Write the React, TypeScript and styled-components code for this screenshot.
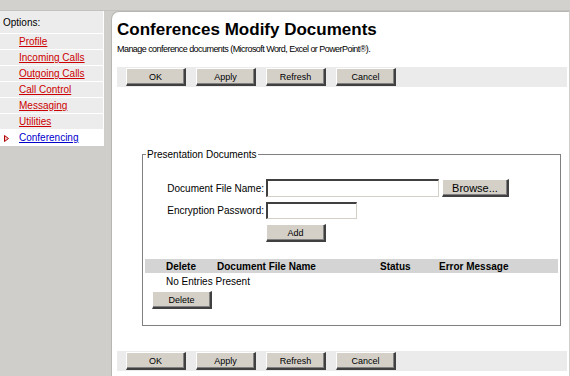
import React from 'react';
import styled, { createGlobalStyle } from 'styled-components';

const GlobalStyle = createGlobalStyle`
  html, body {
    margin: 0;
    padding: 0;
    background: #ffffff;
  }
  body {
    font-family: "Liberation Sans", Arial, sans-serif;
    font-size: 10px;
    color: #000;
  }
`;

const Page = styled.div`
  width: 570px;
  height: 376px;
  display: flex;
  flex-direction: column;
  background: #d0cecb;
  overflow: hidden;
`;

const TopBar = styled.div`
  height: 10px;
  flex: none;
  background: #d3d1ce;
  border-bottom: 1px solid #c4c2bf;
`;

const Body = styled.div`
  flex: 1;
  display: flex;
  min-height: 0;
`;

const Sidebar = styled.nav`
  width: 104px;
  flex: none;
  display: flex;
  flex-direction: column;
`;

const OptionsHeader = styled.div`
  height: 21px;
  padding-left: 3px;
  padding-top: 1px;
  display: flex;
  align-items: center;
  background: #ececec;
  border-right: 1px solid #ffffff;
  border-bottom: 1px solid #ffffff;
  font-size: 10px;
`;

const MenuItem = styled.div<{ $active?: boolean }>`
  height: 15px;
  display: flex;
  align-items: center;
  padding-left: 19px;
  position: relative;
  background: ${p => (p.$active ? '#ffffff' : '#ececec')};
  border-right: 1px solid #ffffff;
  border-bottom: 1px solid #ffffff;
`;

const MenuLink = styled.a<{ $active?: boolean }>`
  color: ${p => (p.$active ? '#0000cc' : '#cc0000')};
  text-decoration: underline;
  font-size: 10px;
  cursor: pointer;
`;

const Marker = styled.svg`
  position: absolute;
  left: 4px;
  top: 5px;
`;

const Gutter = styled.div`
  width: 7px;
  flex: none;
`;

const Main = styled.main`
  flex: 1;
  background: #ffffff;
  border-left: 1px solid #b8b6b3;
  border-top: 1px solid #b8b6b3;
  border-top-left-radius: 8px;
  border-right: 1px solid #d0cecb;
  padding: 7px 2px 0 5px;
  display: flex;
  flex-direction: column;
`;

const Title = styled.h1`
  margin: 0;
  font-size: 17px;
  font-weight: bold;
  line-height: 22px;
  color: #000;
`;

const Subtitle = styled.p`
  margin: 3px 0 0;
  font-size: 9px;
  line-height: 11px;
  letter-spacing: -0.55px;
`;

const ButtonBar = styled.div<{ $bottom?: boolean }>`
  height: 20px;
  margin-top: ${p => (p.$bottom ? 'auto' : '12px')};
  margin-bottom: ${p => (p.$bottom ? '5px' : '0')};
  background: #ebebeb;
  display: flex;
  align-items: center;
  gap: 10px;
  padding-left: 9px;
`;

const Button = styled.button<{ $w?: number; $fs?: number }>`
  width: ${p => p.$w ?? 60}px;
  height: 18px;
  padding: 0;
  background: #d4d0c8;
  font-family: "Liberation Sans", Arial, sans-serif;
  font-size: ${p => p.$fs ?? 9}px;
  color: #000;
  border-style: solid;
  border-width: 1px 2px 2px 1px;
  border-color: #ffffff #404040 #404040 #ffffff;
  box-shadow: inset -1px -1px 0 #808080;
`;

const Fieldset = styled.fieldset`
  margin: 62px 0 0 25px;
  width: 419px;
  height: 177px;
  padding: 0;
  border: 1px solid #808080;
  box-shadow: 1px 1px 0 #ffffff;
  display: flex;
  flex-direction: column;
  box-sizing: border-box;
`;

const Legend = styled.legend`
  margin-left: 3px;
  padding: 0 1px;
  font-size: 10px;
`;

const FormGrid = styled.div`
  margin-top: 19px;
  display: grid;
  grid-template-columns: 121px auto;
  column-gap: 2px;
  row-gap: 5px;
  align-items: center;
`;

const Label = styled.label`
  text-align: right;
  font-size: 10px;
`;

const FieldRow = styled.div`
  display: flex;
  align-items: center;
  gap: 3px;
`;

const TextInput = styled.input<{ $w: number; $h?: number }>`
  width: ${p => p.$w}px;
  height: ${p => p.$h ?? 18}px;
  box-sizing: border-box;
  padding: 0 2px;
  background: #ffffff;
  font-family: "Liberation Sans", Arial, sans-serif;
  font-size: 10px;
  border-style: solid;
  border-width: 2px 1px 1px 2px;
  border-color: #404040 #d4d0c8 #d4d0c8 #404040;
  outline: none;
`;

const Table = styled.div`
  margin: 17px 2px 0 2px;
`;

const TableHeader = styled.div`
  height: 14px;
  background: #d4d4d4;
  display: grid;
  grid-template-columns: 51px 163px 59px 1fr;
  padding-left: 21px;
  align-items: center;
  font-weight: bold;
  font-size: 10px;
`;

const EmptyRow = styled.div`
  padding-left: 21px;
  height: 17px;
  display: flex;
  align-items: center;
  font-size: 10px;
`;

const DeleteWrap = styled.div`
  padding-left: 7px;
  margin-top: 1px;
`;

const menu = [
  'Profile',
  'Incoming Calls',
  'Outgoing Calls',
  'Call Control',
  'Messaging',
  'Utilities',
  'Conferencing',
];

const actions = ['OK', 'Apply', 'Refresh', 'Cancel'];

const App: React.FC = () => {
  return (
    <>
      <GlobalStyle />
      <Page>
        <TopBar />
        <Body>
          <Sidebar>
            <OptionsHeader>Options:</OptionsHeader>
            {menu.map(item => {
              const active = item === 'Conferencing';
              return (
                <MenuItem key={item} $active={active}>
                  {active && (
                    <Marker width="5" height="7" viewBox="0 0 5 7">
                      <path d="M0.5 0.5 L4.5 3.5 L0.5 6.5 Z" fill="#f0c0c0" stroke="#b00000" strokeWidth="1" />
                    </Marker>
                  )}
                  <MenuLink $active={active}>{item}</MenuLink>
                </MenuItem>
              );
            })}
          </Sidebar>
          <Gutter />
          <Main>
            <Title>Conferences Modify Documents</Title>
            <Subtitle>Manage conference documents (Microsoft Word, Excel or PowerPoint®).</Subtitle>
            <ButtonBar>
              {actions.map(a => (
                <Button key={a}>{a}</Button>
              ))}
            </ButtonBar>

            <Fieldset>
              <Legend>Presentation Documents</Legend>
              <FormGrid>
                <Label>Document File Name:</Label>
                <FieldRow>
                  <TextInput $w={173} />
                  <Button $w={67} $fs={11}>Browse...</Button>
                </FieldRow>
                <Label>Encryption Password:</Label>
                <FieldRow>
                  <TextInput $w={91} $h={17} type="password" />
                </FieldRow>
                <span />
                <FieldRow>
                  <Button>Add</Button>
                </FieldRow>
              </FormGrid>
              <Table>
                <TableHeader>
                  <span>Delete</span>
                  <span>Document File Name</span>
                  <span>Status</span>
                  <span>Error Message</span>
                </TableHeader>
                <EmptyRow>No Entries Present</EmptyRow>
                <DeleteWrap>
                  <Button>Delete</Button>
                </DeleteWrap>
              </Table>
            </Fieldset>

            <ButtonBar $bottom>
              {actions.map(a => (
                <Button key={a}>{a}</Button>
              ))}
            </ButtonBar>
          </Main>
        </Body>
      </Page>
    </>
  );
};

export default App;
